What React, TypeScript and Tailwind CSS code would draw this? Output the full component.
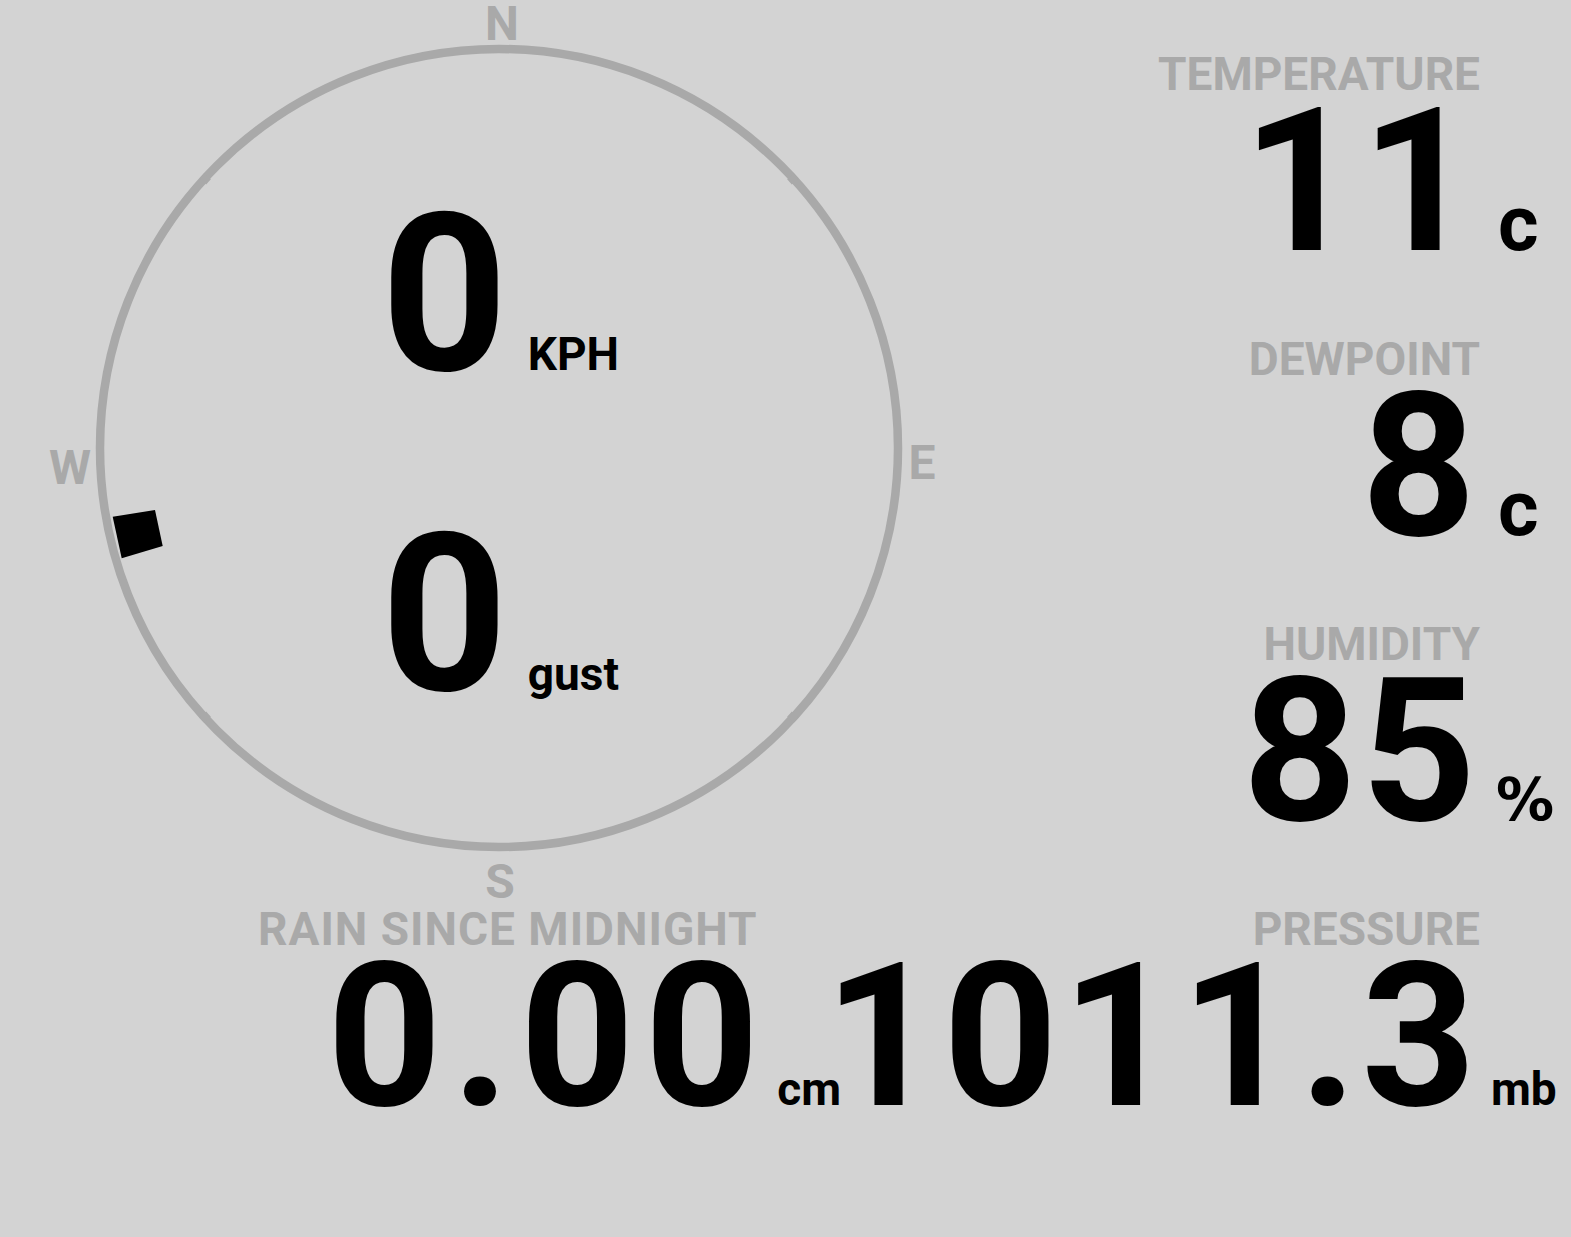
const gray = "#a9a9a9";

function Reading({ label, value, unit, unitClass }: { label: string; value: string; unit: string; unitClass: string }) {
  return (
    <div className="flex flex-col items-end">
      <div className="mr-[91px] text-[46px] leading-[46px] text-[#a9a9a9]">{label}</div>
      <div className="flex items-baseline">
        <span className="shrink-0 whitespace-nowrap text-[200px] leading-[170px] tracking-[4px] text-black">{value}</span>
        <span className={"w-[91px] shrink-0 leading-none text-black " + unitClass}>{unit}</span>
      </div>
    </div>
  );
}

function Compass() {
  const cx = 499;
  const cy = 448;
  const r = 399;
  const ticks = [42.5, 137.5, 222.5, 317.5].map((a) => {
    const rad = (a * Math.PI) / 180;
    return {
      x1: cx + Math.cos(rad) * (r - 5),
      y1: cy + Math.sin(rad) * (r - 5),
      x2: cx + Math.cos(rad) * (r + 4),
      y2: cy + Math.sin(rad) * (r + 4),
    };
  });
  return (
    <svg className="absolute inset-0" width="1000" height="906" viewBox="0 0 1000 906">
      <circle cx={cx} cy={cy} r={r} fill="none" stroke={gray} strokeWidth="8.5" />
      {ticks.map((t, i) => (
        <line key={i} x1={t.x1} y1={t.y1} x2={t.x2} y2={t.y2} stroke={gray} strokeWidth="7" />
      ))}
      <polygon points="112.7,516.7 155,510 162.7,546 121.7,558.3" fill="#000" />
    </svg>
  );
}

export default function App() {
  return (
    <div className="flex h-[1237px] w-[1571px] overflow-hidden bg-[#d3d3d3] font-[Roboto,sans-serif] font-bold">
      <div className="flex w-[1000px] shrink-0 flex-col">
        <div className="relative h-[906px]">
          <Compass />
          <div className="absolute left-[502px] top-0 -translate-x-1/2 text-[48px] leading-none text-[#a9a9a9]">N</div>
          <div className="absolute left-[922px] top-[439px] -translate-x-1/2 text-[48px] leading-none text-[#a9a9a9]">E</div>
          <div className="absolute left-[500px] top-[858px] -translate-x-1/2 text-[48px] leading-none text-[#a9a9a9]">S</div>
          <div className="absolute left-[70px] top-[444px] -translate-x-1/2 text-[48px] leading-none text-[#a9a9a9]">W</div>
          <div className="relative flex flex-col items-center pt-[135px]">
            <div className="flex items-baseline">
              <span className="text-[221px] leading-[320px] text-black">0</span>
              <span className="ml-[20px] text-[46px] leading-none text-black">KPH</span>
            </div>
            <div className="flex items-baseline">
              <span className="text-[221px] leading-[320px] text-black">0</span>
              <span className="ml-[20px] text-[46px] leading-none text-black">gust</span>
            </div>
          </div>
        </div>
        <div className="ml-[258px] self-start text-[46px] leading-[46px] tracking-[1px] text-[#a9a9a9]">RAIN SINCE MIDNIGHT</div>
        <div className="ml-[327px] flex items-baseline self-start">
          <span className="whitespace-nowrap text-[200px] leading-[170px] tracking-[10px] text-black">0.00</span>
          <span className="ml-[8px] text-[46px] leading-none text-black">cm</span>
        </div>
      </div>
      <div className="flex min-w-0 flex-1 flex-col items-end gap-[69px] pt-[51px]">
        <Reading label="TEMPERATURE" value="11" unit="c" unitClass="pl-[18px] text-[78px]" />
        <Reading label="DEWPOINT" value="8" unit="c" unitClass="pl-[18px] text-[78px]" />
        <Reading label="HUMIDITY" value="85" unit="%" unitClass="pl-[16px] font-['DejaVu_Sans',sans-serif] text-[58px]" />
        <Reading label="PRESSURE" value="1011.3" unit="mb" unitClass="pl-[11px] text-[46px]" />
      </div>
    </div>
  );
}
